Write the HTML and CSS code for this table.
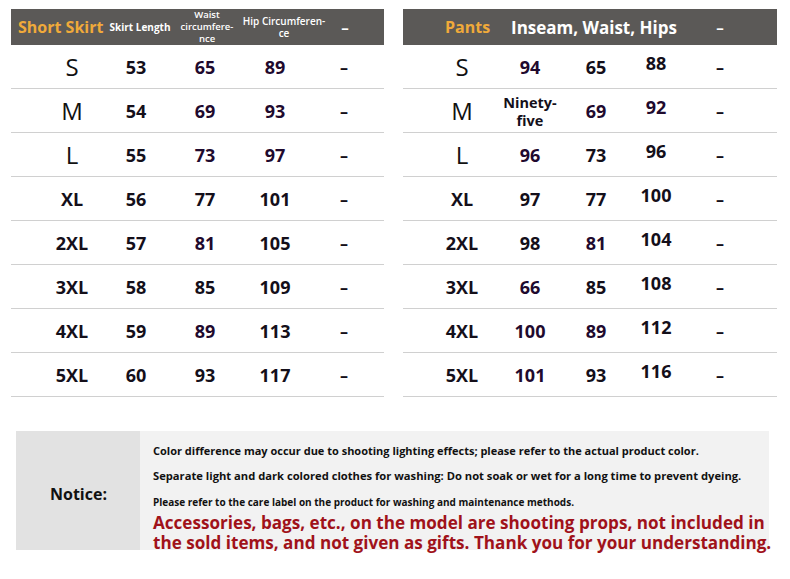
FILE: index.html
```html
<!DOCTYPE html>
<html lang="en">
<head>
<meta charset="utf-8">
<link rel="stylesheet" href="styles.css">
</head>
<body>
<div class="page">
  <div class="tables">
    <section class="table left">
      <div class="head">
        <div class="h-title">Short Skirt</div>
        <div class="h-c2">Skirt Length</div>
        <div class="h-c3">Waist circumfere-<br>nce</div>
        <div class="h-c4">Hip Circumferen-<br>ce</div>
        <div class="h-c5">–</div>
      </div>
      <div class="row"><div class="sz big">S</div><div>53</div><div class="pu">65</div><div class="pu">89</div><div class="dash">–</div></div>
      <div class="row"><div class="sz big">M</div><div>54</div><div class="pu">69</div><div class="pu">93</div><div class="dash">–</div></div>
      <div class="row"><div class="sz big">L</div><div>55</div><div class="pu">73</div><div class="pu">97</div><div class="dash">–</div></div>
      <div class="row"><div class="sz">XL</div><div>56</div><div>77</div><div>101</div><div class="dash">–</div></div>
      <div class="row"><div class="sz">2XL</div><div>57</div><div class="pu">81</div><div>105</div><div class="dash">–</div></div>
      <div class="row"><div class="sz">3XL</div><div>58</div><div>85</div><div>109</div><div class="dash">–</div></div>
      <div class="row"><div class="sz">4XL</div><div>59</div><div class="pu">89</div><div>113</div><div class="dash">–</div></div>
      <div class="row"><div class="sz">5XL</div><div>60</div><div>93</div><div>117</div><div class="dash">–</div></div>
    </section>
    <section class="table right">
      <div class="head">
        <div class="h-title">Pants</div>
        <div class="h-wide">Inseam, Waist, Hips</div>
        <div class="h-c5">–</div>
      </div>
      <div class="row"><div class="sz big">S</div><div class="pu">94</div><div>65</div><div class="hi">88</div><div class="dash">–</div></div>
      <div class="row"><div class="sz big">M</div><div class="word">Ninety-<br>five</div><div class="pu">69</div><div class="hi pu">92</div><div class="dash">–</div></div>
      <div class="row"><div class="sz big">L</div><div class="pu">96</div><div>73</div><div class="hi">96</div><div class="dash">–</div></div>
      <div class="row"><div class="sz">XL</div><div>97</div><div>77</div><div class="hi">100</div><div class="dash">–</div></div>
      <div class="row"><div class="sz">2XL</div><div>98</div><div class="pu">81</div><div class="hi">104</div><div class="dash">–</div></div>
      <div class="row"><div class="sz">3XL</div><div class="pu">66</div><div>85</div><div class="hi">108</div><div class="dash">–</div></div>
      <div class="row"><div class="sz">4XL</div><div class="pu">100</div><div class="pu">89</div><div class="hi">112</div><div class="dash">–</div></div>
      <div class="row"><div class="sz">5XL</div><div class="pu">101</div><div>93</div><div class="hi">116</div><div class="dash">–</div></div>
    </section>
  </div>
  <div class="notice">
    <div class="n-label">Notice:</div>
    <div class="n-body">
      <p class="l1">Color difference may occur due to shooting lighting effects; please refer to the actual product color.</p>
      <p class="l2">Separate light and dark colored clothes for washing: Do not soak or wet for a long time to prevent dyeing.</p>
      <p class="l3">Please refer to the care label on the product for washing and maintenance methods.</p>
      <p class="red">Accessories, bags, etc., on the model are shooting props, not included in<br>the sold items, and not given as gifts. Thank you for your understanding.</p>
    </div>
  </div>
</div>
</body>
</html>
```
FILE: styles.css
```css
* { box-sizing: border-box; }
html, body { margin: 0; padding: 0; background: #fff; }
body { font-family: "Open Sans", "Noto Sans", sans-serif; color: #111; }
.page { width: 790px; height: 579px; padding-top: 9px; }
.tables { display: flex; padding-left: 11px; gap: 19px; }
.table { display: flex; flex-direction: column; }
.table.left { width: 373px; }
.table.right { width: 374px; }
.head {
  height: 36px; background: #5b5957; color: #fff; display: flex; align-items: center;
  font-weight: 700;
}
.left .head { padding-left: 7px; }
.h-title { color: #f0aa3a; font-size: 16px; }
.left .h-title { width: 88px; }
.h-c2 { width: 68px; text-align: center; font-size: 10px; }
.h-c3 { width: 66px; text-align: center; font-size: 9.5px; line-height: 12px; font-weight: 600; }
.h-c4 { width: 88px; text-align: center; font-size: 10px; line-height: 12px; font-weight: 600; }
.h-c5 { width: 34px; text-align: center; font-size: 15px; }
.right .head { padding-left: 42px; }
.right .h-title { width: 66px; font-size: 16px; }
.h-wide { font-size: 17px; width: 192px; }
.right .h-c5 { width: 34px; }
.row {
  height: 44px; display: grid; align-items: center; text-align: center;
  border-bottom: 1px solid #d0d0d0; font-weight: 700; font-size: 18px; color: #140f1a;
}
.left .row { grid-template-columns: 66px 62px 76px 64px 74px; padding-left: 28px; }
.right .row { grid-template-columns: 64px 72px 60px 60px 68px; padding-left: 27px; }
.row .big { font-weight: 400; font-size: 24px; color: #111; }
.row .sz { font-size: 18px; }
.row .sz.big { font-size: 24px; }
.pu { color: #1f0a2e; }
.hi { padding-bottom: 8px; }
.row .word { font-size: 14.5px; line-height: 18px; padding-top: 2px; }
.row .dash { font-size: 16px; }
.notice {
  margin: 34px 0 0 16px; width: 753px; height: 119px; display: flex; background: #f2f2f2;
}
.n-label {
  flex: none; width: 124px; background: #e2e2e2; display: flex; align-items: center; padding-left: 34px;
  font-weight: 700; font-size: 16px; padding-top: 6px;
}
.n-body { padding: 12px 0 0 13px; min-width: 0; }
.n-body p { margin: 0; font-weight: 700; white-space: nowrap; }
.l1 { font-size: 11px; line-height: 16px; }
.l2 { font-size: 11.2px; line-height: 16px; margin-top: 9px !important; }
.l3 { font-size: 10px; line-height: 16px; margin-top: 10px !important; }
.n-body p.red {
  color: #a0121a; font-weight: 700; font-size: 17.1px; line-height: 20px;
  margin-top: 3px;
}
```
